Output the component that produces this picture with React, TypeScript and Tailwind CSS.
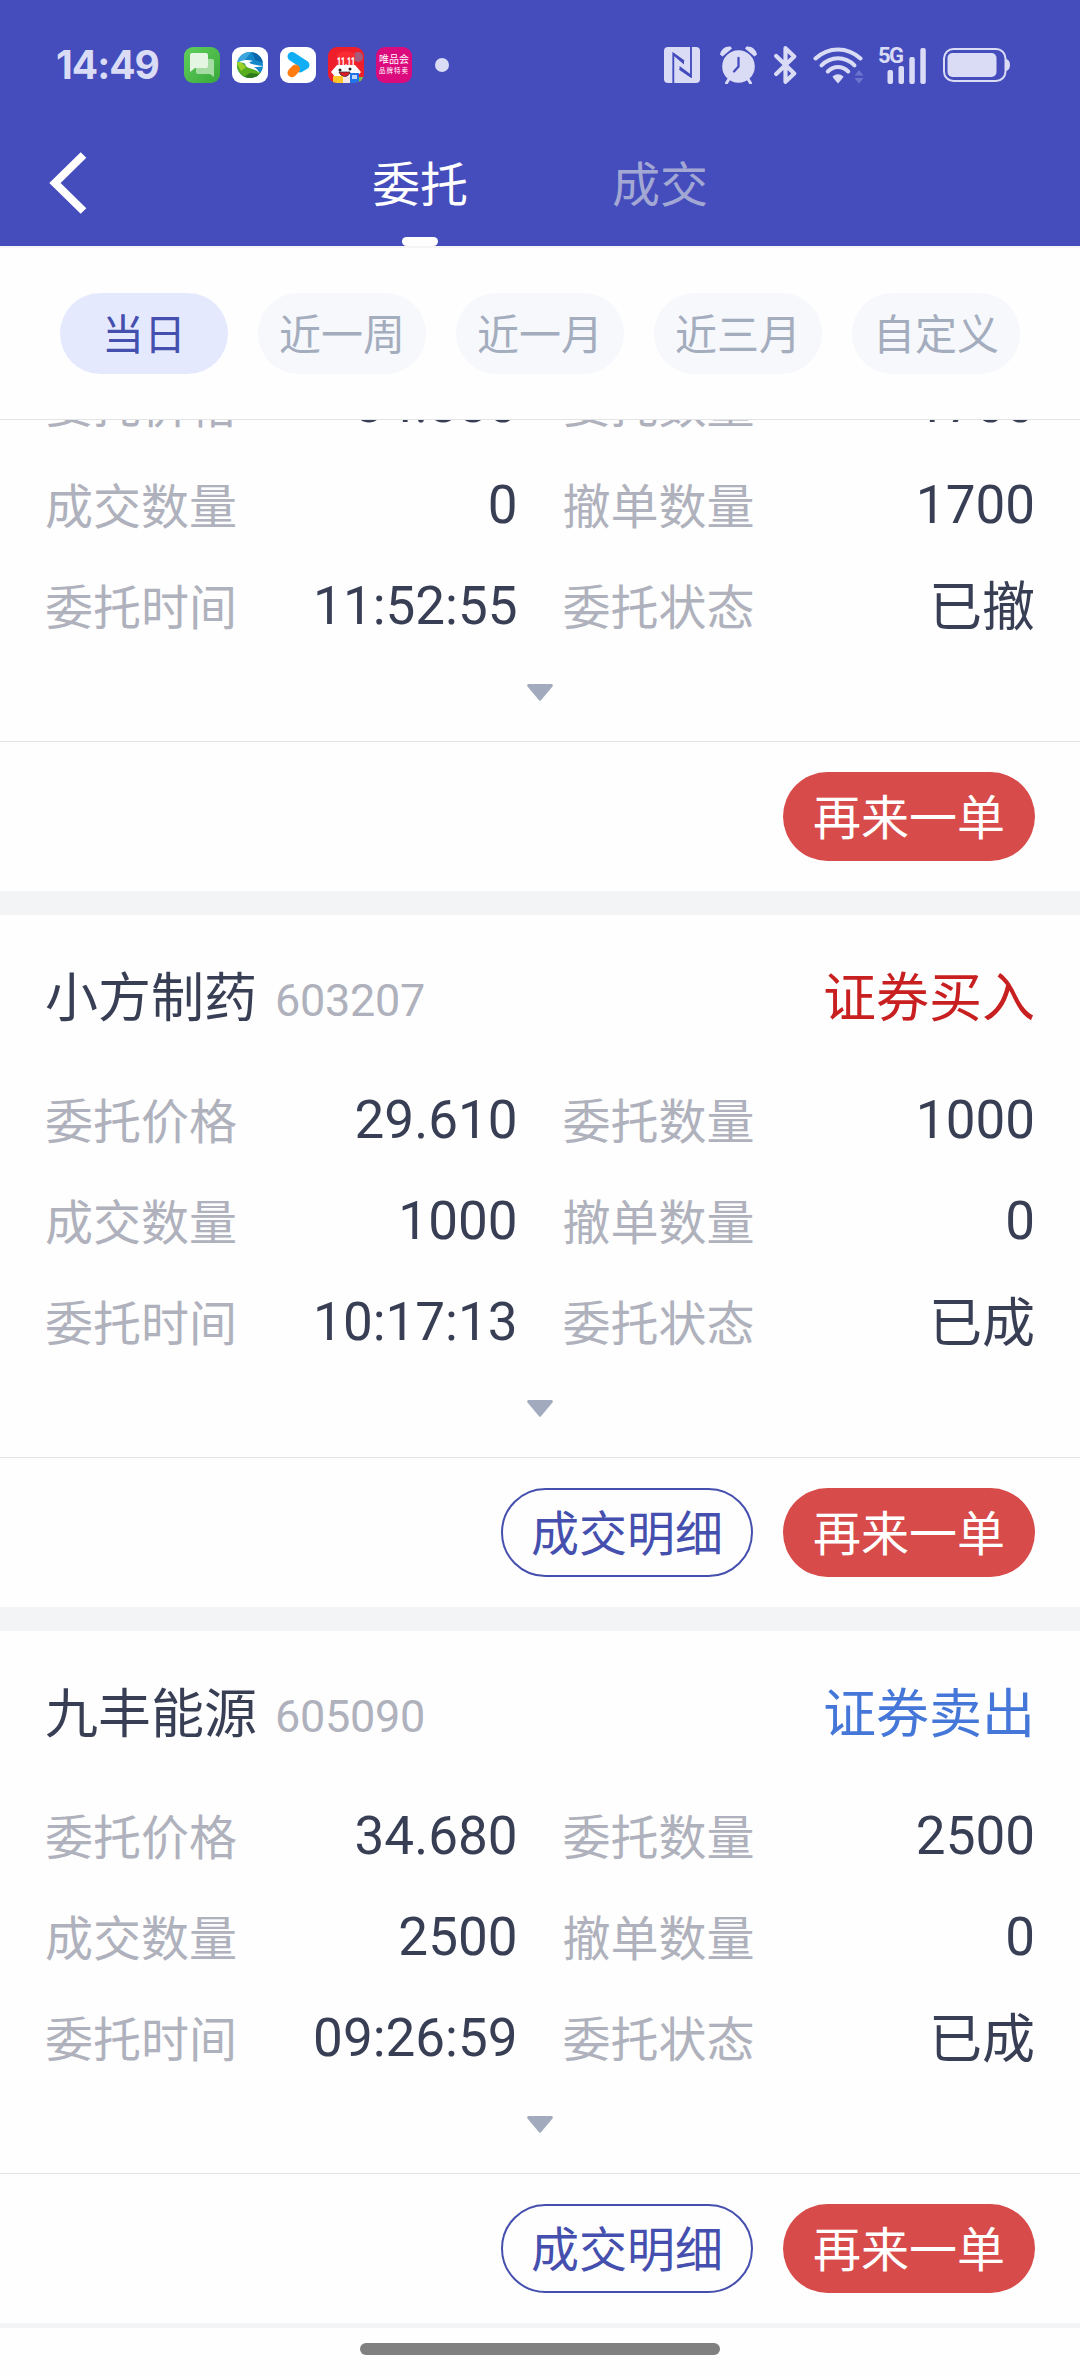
import { useState } from "react";
import clsx from "clsx";

type Order = {
  id: string;
  name?: string;
  code?: string;
  side?: "buy" | "sell";
  price: string;
  amount: string;
  filled: string;
  cancelled: string;
  time: string;
  status: string;
  hasDetail: boolean;
};

const TABS = ["委托", "成交"];
const RANGES = ["当日", "近一周", "近一月", "近三月", "自定义"];

const ORDERS: Order[] = [
  {
    id: "1",
    price: "34.880",
    amount: "1700",
    filled: "0",
    cancelled: "1700",
    time: "11:52:55",
    status: "已撤",
    hasDetail: false,
  },
  {
    id: "2",
    name: "小方制药",
    code: "603207",
    side: "buy",
    price: "29.610",
    amount: "1000",
    filled: "1000",
    cancelled: "0",
    time: "10:17:13",
    status: "已成",
    hasDetail: true,
  },
  {
    id: "3",
    name: "九丰能源",
    code: "605090",
    side: "sell",
    price: "34.680",
    amount: "2500",
    filled: "2500",
    cancelled: "0",
    time: "09:26:59",
    status: "已成",
    hasDetail: true,
  },
];

function AppIcons() {
  return (
    <div className="ml-[26px] flex items-center gap-3">
      {/* Messages */}
      <svg width="36" height="36" viewBox="0 0 36 36">
        <defs>
          <linearGradient id="msg" x1="0" y1="0" x2="1" y2="1">
            <stop offset="0" stopColor="#62cf5c" />
            <stop offset="1" stopColor="#37a83a" />
          </linearGradient>
        </defs>
        <rect width="36" height="36" rx="9" fill="url(#msg)" />
        <path d="M14 12h14a2 2 0 0 1 2 2v16l-4-3H14a2 2 0 0 1-2-2V14a2 2 0 0 1 2-2z" fill="#a5dca4" />
        <path d="M8 6h14a2 2 0 0 1 2 2v11a2 2 0 0 1-2 2H11l-5 4V8a2 2 0 0 1 2-2z" fill="#e4f5e2" />
      </svg>
      {/* Landscape globe */}
      <svg width="36" height="36" viewBox="0 0 36 36">
        <defs>
          <clipPath id="globe">
            <circle cx="18" cy="18" r="13" />
          </clipPath>
        </defs>
        <rect width="36" height="36" rx="9" fill="#fff" />
        <g clipPath="url(#globe)">
          <rect width="36" height="36" fill="#1487c9" />
          <path d="M4 4h16l-8 10-8 2z" fill="#3aa6dd" />
          <path d="M20 5l12 3v8l-9-3z" fill="#0c66ac" />
          <path d="M3 15l7 0 6 5 14 6-6 8H3z" fill="#56ad1f" />
          <path d="M4 15l5 0 5 5-5 4z" fill="#9bcf2a" />
          <path d="M12 30l6-4 9 1-4 6z" fill="#2b7a1c" />
          <path d="M7 15c6-3 10-2 14-1-5 1-4 2-1 3 4 1 9 2 12 2-5 1-8 1-10 1 3 2 5 4 5 6-3-4-8-4-12-6-3-2 1-4-8-5z" fill="#fff" />
        </g>
      </svg>
      {/* Video player */}
      <svg width="36" height="36" viewBox="0 0 36 36">
        <rect width="36" height="36" rx="9" fill="#fff" />
        <path d="M12 9.500L25 18l-5 3" stroke="#12aef5" strokeWidth="9" strokeLinecap="round" strokeLinejoin="round" fill="none" />
        <path d="M15.500 22L12 25.800" stroke="#ff7d10" strokeWidth="9" strokeLinecap="round" />
      </svg>
      {/* Shopping festival */}
      <svg width="36" height="36" viewBox="0 0 36 36">
        <defs>
          <clipPath id="mall">
            <rect width="36" height="36" rx="9" />
          </clipPath>
        </defs>
        <g clipPath="url(#mall)">
          <rect width="36" height="36" fill="#ee1f2b" />
          <circle cx="30" cy="10" r="5" fill="#a75b7c" />
          <path d="M9 8c5-5 13-5 18 0l-1 12H9z" fill="#fa2b32" />
          <path d="M3 25l6-7h18l6 7-5 6H8z" fill="#fff" />
          <circle cx="12" cy="23" r="1.5" fill="#222" />
          <circle cx="22" cy="22" r="1.5" fill="#222" />
          <path d="M11 25h11c-1 6-9 6-11 0z" fill="#d91f2b" stroke="#222" strokeWidth="0.7" />
          <path d="M5 29h10v7H5z" fill="#ffc62b" />
          <path d="M15 30h7v6h-7z" fill="#f7e7e4" />
          <path d="M22 26h9v10h-9z" fill="#2373e8" />
          <path d="M24 28h5v4h-5z" fill="#bcd7fb" />
          <path d="M31 30h5v6h-5z" fill="#6fbf52" />
        </g>
        <text x="18" y="18.5" textAnchor="middle" fontFamily="Roboto, sans-serif" fontSize="12" fontWeight="900" textLength="18" lengthAdjust="spacingAndGlyphs" fill="#fff">
          11.11
        </text>
      </svg>
      <div className="flex h-9 w-9 flex-col items-center justify-center rounded-[9px] bg-[#db0a7d] text-white">
        <span className="text-[10px] leading-[12px]">唯品会</span>
        <span className="text-[6.5px] leading-[10px] tracking-[1px]">品牌特卖</span>
      </div>
      <div className="ml-[11px] h-3.5 w-3.5 rounded-full bg-[#dadcf5]" />
    </div>
  );
}

function SystemIcons() {
  return (
    <div className="ml-auto flex items-center text-[#dadcf5]">
      {/* NFC */}
      <svg width="36" height="36" viewBox="0 0 36 36">
        <rect width="36" height="36" rx="4" fill="currentColor" />
        <path d="M9.3 36V6.8L20 14.2M27 0v29.5L15.6 21.8" fill="none" stroke="#454dbd" strokeWidth="1.9" />
        <path d="M9.3 5.5L20 13.5v4L9.3 8.500zM27 30.800L15.600 23v-4L27 27.500z" fill="#454dbd" />
      </svg>
      {/* Alarm */}
      <svg className="ml-5" width="37" height="38" viewBox="0 0 37 38">
        <circle cx="18.500" cy="20.500" r="16.300" fill="currentColor" />
        <path d="M0 8.500C1 3.500 5 0 10.500 .5L12 2.500 2.500 10.500zM37 8.500C36 3.500 32 0 26.500 .5L25 2.500 34.500 10.500z" fill="currentColor" />
        <path d="M9 33l-2.500 4M28 33l2.500 4" stroke="currentColor" strokeWidth="3" strokeLinecap="round" />
        <path d="M18.500 12v8.500L14 25.500" fill="none" stroke="#454dbd" strokeWidth="2.300" strokeLinecap="round" />
      </svg>
      {/* Bluetooth */}
      <svg className="ml-[17px]" width="23" height="38" viewBox="0 0 23 38">
        <path d="M2.200 10l18 17.500-8.700 8.300V2.200l8.700 8.300L2.200 28" fill="none" stroke="currentColor" strokeWidth="4.200" strokeLinejoin="round" strokeLinecap="round" />
      </svg>
      {/* Wi-Fi */}
      <svg className="ml-4" width="51" height="37" viewBox="0 0 51 37">
        <g fill="none" stroke="currentColor" strokeWidth="4" strokeLinecap="round">
          <path d="M2.500 11.500C15.500-.6 34.500-.6 47.500 11.500" />
          <path d="M8.500 18.300C18 8.800 32 8.800 41.500 18.300" />
          <path d="M14.800 24.500C21 18.500 29 18.500 35.200 24.500" />
        </g>
        <path d="M19.500 29.500Q25 25 30.500 29.500 30 31 25 36.500 20 31 19.500 29.500z" fill="currentColor" />
        <path d="M41.500 28.500L46 23l4.500 5.500zM41.500 31L46 36.500 50.500 31z" fill="#6d74d0" />
      </svg>
      {/* Signal */}
      <div className="relative ml-3.5 h-[37px] w-[48px]">
        <span className="absolute top-0 left-0 font-[Roboto] text-[22px] leading-[17px] font-bold tracking-[-1.5px]">5G</span>
        <svg width="48" height="37" viewBox="0 0 48 37" fill="currentColor">
          <rect x="9.500" y="23" width="5.500" height="14" rx="2" />
          <rect x="20.500" y="19" width="5.500" height="18" rx="2" />
          <rect x="31.300" y="10" width="5.500" height="27" rx="2" />
          <rect x="42.300" y="1" width="5.500" height="36" rx="2" />
        </svg>
      </div>
      {/* Battery */}
      <svg className="ml-[17px]" width="67" height="34" viewBox="0 0 67 34">
        <rect x="1" y="1" width="61.500" height="32" rx="9.500" fill="none" stroke="currentColor" strokeWidth="2" />
        <rect x="4.500" y="5" width="49" height="24" rx="5" fill="currentColor" />
        <path d="M63 11q4 1 4 6t-4 6z" fill="currentColor" />
      </svg>
    </div>
  );
}

function Field({ label, value, valueClass = "leading-[101px]" }: { label: string; value: string; valueClass?: string }) {
  return (
    <div className="flex h-[101px] items-start justify-between">
      <span className="text-5xl leading-[105px] text-[#afb1bc]">{label}</span>
      <span className={clsx("text-[53px] text-[#383e54]", valueClass)}>{value}</span>
    </div>
  );
}

function OrderCard({ order }: { order: Order }) {
  return (
    <article className="shrink-0">
      {order.name && (
        <div className="flex h-[155px] items-start px-[45px] pt-2.5 text-[53px] leading-[149px]">
          <h2 className="text-[#383e54]">{order.name}</h2>
          <span className="ml-[18px] text-[45px] leading-[151px] tracking-[-0.3px] text-[#afb1bc]">{order.code}</span>
          <span className={clsx("ml-auto", order.side === "buy" ? "text-[#c82020]" : "text-[#4577d9]")}>
            {order.side === "buy" ? "证券买入" : "证券卖出"}
          </span>
        </div>
      )}
      <div className="grid grid-cols-2 gap-x-[45px] px-[45px]">
        <Field label="委托价格" value={order.price} />
        <Field label="委托数量" value={order.amount} />
        <Field label="成交数量" value={order.filled} />
        <Field label="撤单数量" value={order.cancelled} />
        <Field label="委托时间" value={order.time} />
        <Field label="委托状态" value={order.status} valueClass="leading-[104px]" />
      </div>
      <div className="flex h-[84px] justify-center pt-[27px]">
        <svg width="26" height="17" viewBox="0 0 26 17">
          <path d="M1.500 0h23Q26.500 .5 25.500 2.500L14 16.300q-1 1-2 0L.5 2.500Q-.5 .5 1.500 0z" fill="#a2abbd" />
        </svg>
      </div>
      <div className="flex justify-end gap-[30px] border-t border-[#e3e4e6] px-[45px] py-[30px] text-5xl">
        {order.hasDetail && (
          <button className="h-[89px] w-[252px] rounded-full border-2 border-[#454fae] pt-1 text-[#454fae]">成交明细</button>
        )}
        <button className="h-[89px] w-[252px] rounded-full bg-[#d84b4b] pt-1 text-white">再来一单</button>
      </div>
      <div className="h-6 bg-[#f3f4f6]" />
    </article>
  );
}

export default function App() {
  const [tab, setTab] = useState(TABS[0]);
  const [range, setRange] = useState(RANGES[0]);

  return (
    <div className="flex h-[2376px] w-[1080px] flex-col overflow-hidden bg-[#fefefe] font-[Roboto,'Noto_Sans_CJK_SC',sans-serif]">
      <header className="h-[246px] shrink-0 bg-[#454dbd]">
        {/* Status bar */}
        <div className="flex h-[130px] items-center pr-[70px] pl-14">
          <span className="w-[102px] font-[Inter] text-[39px] font-bold tracking-[-1px] text-[#dadcf5]">14:49</span>
          <AppIcons />
          <SystemIcons />
        </div>
        {/* Title bar */}
        <div className="flex h-[116px] items-start">
          <button aria-label="返回" className="mt-[21px] ml-[49px]">
            <svg width="38" height="64" viewBox="0 0 38 64">
              <path d="M34.500 4L6 32l28.500 28" fill="none" stroke="#fff" strokeWidth="8" />
            </svg>
          </button>
          <nav className="ml-[213px] flex">
            {TABS.map((t) => (
              <button
                key={t}
                onClick={() => setTab(t)}
                className={clsx(
                  "flex h-[116px] w-[240px] flex-col items-center justify-between text-5xl",
                  t === tab ? "text-white" : "text-[#a2a8d3]"
                )}
              >
                <span className="h-[107px] leading-[111px]">{t}</span>
                {t === tab && <span className="h-[9px] w-9 rounded-[5px] bg-white" />}
              </button>
            ))}
          </nav>
        </div>
      </header>

      {/* Date range filter */}
      <div className="flex h-[174px] shrink-0 gap-[30px] border-t-2 border-b border-t-[#f5f5f6] border-b-[#e3e4e6] px-[60px] pt-[45px]">
        {RANGES.map((r) => (
          <button
            key={r}
            onClick={() => setRange(r)}
            className={clsx(
              "h-[81px] w-[168px] rounded-full pt-1 text-[42px] leading-[77px]",
              r === range ? "bg-[#e5e9fe] text-[#454fae]" : "bg-[#f6f8fc] text-[#a4adbe]"
            )}
          >
            {r}
          </button>
        ))}
      </div>

      {/* Order list, scrolled part way into the first order */}
      <main className="flex h-[1908px] shrink-0 flex-col overflow-hidden">
        <div className="-mt-[66px]">
          {ORDERS.map((o) => (
            <OrderCard key={o.id} order={o} />
          ))}
        </div>
      </main>

      <div className="flex justify-center pt-[15px]">
        <div className="h-3 w-[360px] rounded-full bg-[#808080]" />
      </div>
    </div>
  );
}
